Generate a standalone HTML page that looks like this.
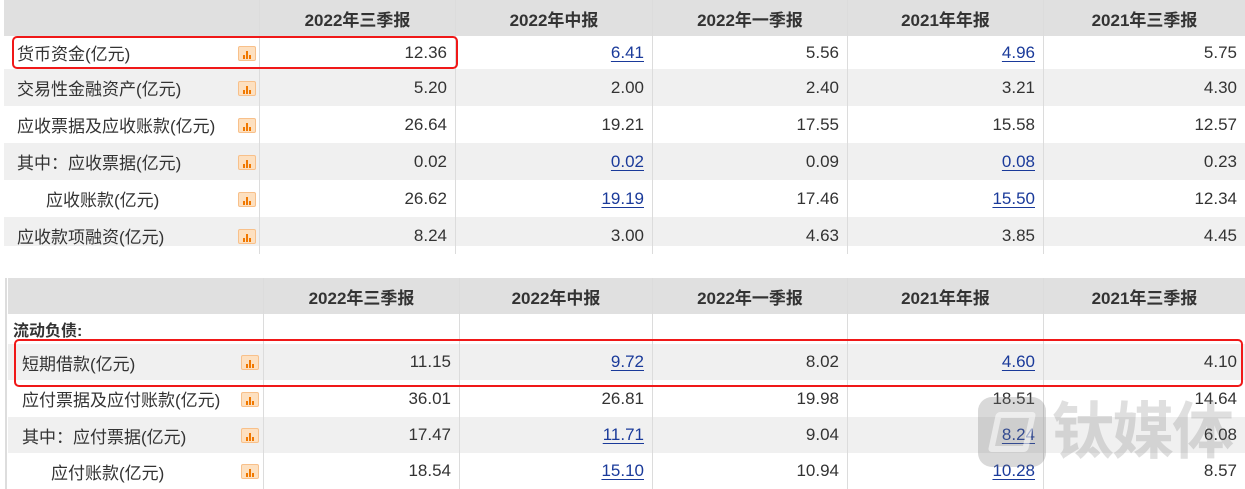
<!DOCTYPE html>
<html><head><meta charset="utf-8"><style>
body{margin:0;width:1245px;height:489px;background:#fff;position:relative;overflow:hidden;font-family:"Liberation Sans","Noto Sans CJK SC",sans-serif;color:#333;font-size:17px}
.r{position:absolute;left:4px;right:0;display:flex;align-items:center}
.g{background:#f0f0f0}
.h{background:#e0e0e0;font-weight:bold;font-size:17px}
.c{position:absolute;top:0;bottom:0;display:flex;align-items:center;justify-content:flex-end;padding-right:8px;box-sizing:border-box;border-left:1px solid #dcdcdc}
.h .c{justify-content:center;padding:0}
.l{position:absolute;top:0;bottom:0;display:flex;align-items:center}
a{color:#1a3a9a;text-decoration:underline;text-underline-offset:3px}
.ic{position:absolute;width:16px;height:13px;background:#fde0c0;border:1px solid #f8c08a;border-radius:2px;top:50%;margin-top:-7px}
.ic:before{content:"";position:absolute;left:4px;bottom:1px;width:2px;height:4px;background:#f07800;box-shadow:3px -2px 0 0 #f07800,6px 0 0 #f07800}
.ic:after{content:"";position:absolute;left:7px;bottom:1px;width:2px;height:8px;background:#f07800}
.box{position:absolute;border:2.5px solid #f01818;border-radius:5px}
</style></head><body>

<div class="r h" style="top:0;height:36px">
<div class="c" style="left:255px;width:196px">2022年三季报</div>
<div class="c" style="left:451px;width:197px">2022年中报</div>
<div class="c" style="left:648px;width:195px">2022年一季报</div>
<div class="c" style="left:843px;width:196px">2021年年报</div>
<div class="c" style="left:1039px;width:202px">2021年三季报</div>
</div>

<div class="r" style="top:36px;height:33px"><div class="l" style="left:13px">货币资金(亿元)</div><span class="ic" style="left:234px"></span>
<div class="c" style="left:255px;width:196px">12.36</div><div class="c" style="left:451px;width:197px"><a>6.41</a></div><div class="c" style="left:648px;width:195px">5.56</div><div class="c" style="left:843px;width:196px"><a>4.96</a></div><div class="c" style="left:1039px;width:202px">5.75</div></div>

<div class="r g" style="top:69px;height:37px"><div class="l" style="left:13px">交易性金融资产(亿元)</div><span class="ic" style="left:234px"></span>
<div class="c" style="left:255px;width:196px">5.20</div><div class="c" style="left:451px;width:197px">2.00</div><div class="c" style="left:648px;width:195px">2.40</div><div class="c" style="left:843px;width:196px">3.21</div><div class="c" style="left:1039px;width:202px">4.30</div></div>

<div class="r" style="top:106px;height:37px"><div class="l" style="left:13px">应收票据及应收账款(亿元)</div><span class="ic" style="left:234px"></span>
<div class="c" style="left:255px;width:196px">26.64</div><div class="c" style="left:451px;width:197px">19.21</div><div class="c" style="left:648px;width:195px">17.55</div><div class="c" style="left:843px;width:196px">15.58</div><div class="c" style="left:1039px;width:202px">12.57</div></div>

<div class="r g" style="top:143px;height:37px"><div class="l" style="left:13px">其中：应收票据(亿元)</div><span class="ic" style="left:234px"></span>
<div class="c" style="left:255px;width:196px">0.02</div><div class="c" style="left:451px;width:197px"><a>0.02</a></div><div class="c" style="left:648px;width:195px">0.09</div><div class="c" style="left:843px;width:196px"><a>0.08</a></div><div class="c" style="left:1039px;width:202px">0.23</div></div>

<div class="r" style="top:180px;height:37px"><div class="l" style="left:42px">应收账款(亿元)</div><span class="ic" style="left:234px"></span>
<div class="c" style="left:255px;width:196px">26.62</div><div class="c" style="left:451px;width:197px"><a>19.19</a></div><div class="c" style="left:648px;width:195px">17.46</div><div class="c" style="left:843px;width:196px"><a>15.50</a></div><div class="c" style="left:1039px;width:202px">12.34</div></div>

<div class="r g" style="top:217px;height:29px;align-items:flex-start"><div class="l" style="left:13px;bottom:-8px">应收款项融资(亿元)</div><span class="ic" style="left:234px;margin-top:-3px"></span>
<div class="c" style="left:255px;width:196px;bottom:-8px">8.24</div><div class="c" style="left:451px;width:197px;bottom:-8px">3.00</div><div class="c" style="left:648px;width:195px;bottom:-8px">4.63</div><div class="c" style="left:843px;width:196px;bottom:-8px">3.85</div><div class="c" style="left:1039px;width:202px;bottom:-8px">4.45</div></div>

<div class="box" style="left:12px;top:36px;width:442px;height:29px"></div>

<div style="position:absolute;left:5px;top:278px;width:2px;height:211px;background:#ddd"></div>
<div class="r h" style="top:278px;height:36px;left:8px">
<div class="c" style="left:255px;width:196px">2022年三季报</div>
<div class="c" style="left:451px;width:193px">2022年中报</div>
<div class="c" style="left:644px;width:195px">2022年一季报</div>
<div class="c" style="left:839px;width:196px">2021年年报</div>
<div class="c" style="left:1035px;width:202px">2021年三季报</div>
</div>
<div class="r" style="top:314px;height:30px;left:8px"><div class="l" style="left:5px;font-weight:bold;font-size:16px">流动负债:</div>
<div class="c" style="left:255px;width:196px"></div><div class="c" style="left:451px;width:193px"></div><div class="c" style="left:644px;width:195px"></div><div class="c" style="left:839px;width:196px"></div><div class="c" style="left:1035px;width:202px"></div></div>

<div class="r g" style="top:344px;height:36px;left:8px"><div class="l" style="left:14px">短期借款(亿元)</div><span class="ic" style="left:233px"></span>
<div class="c" style="left:255px;width:196px">11.15</div><div class="c" style="left:451px;width:193px"><a>9.72</a></div><div class="c" style="left:644px;width:195px">8.02</div><div class="c" style="left:839px;width:196px"><a>4.60</a></div><div class="c" style="left:1035px;width:202px">4.10</div></div>

<div class="r" style="top:380px;height:37px;left:8px"><div class="l" style="left:14px">应付票据及应付账款(亿元)</div><span class="ic" style="left:233px"></span>
<div class="c" style="left:255px;width:196px">36.01</div><div class="c" style="left:451px;width:193px">26.81</div><div class="c" style="left:644px;width:195px">19.98</div><div class="c" style="left:839px;width:196px">18.51</div><div class="c" style="left:1035px;width:202px">14.64</div></div>

<div class="r g" style="top:417px;height:36px;left:8px"><div class="l" style="left:14px">其中：应付票据(亿元)</div><span class="ic" style="left:233px"></span>
<div class="c" style="left:255px;width:196px">17.47</div><div class="c" style="left:451px;width:193px"><a>11.71</a></div><div class="c" style="left:644px;width:195px">9.04</div><div class="c" style="left:839px;width:196px"><a>8.24</a></div><div class="c" style="left:1035px;width:202px">6.08</div></div>

<div class="r" style="top:453px;height:36px;left:8px"><div class="l" style="left:43px">应付账款(亿元)</div><span class="ic" style="left:233px"></span>
<div class="c" style="left:255px;width:196px">18.54</div><div class="c" style="left:451px;width:193px"><a>15.10</a></div><div class="c" style="left:644px;width:195px">10.94</div><div class="c" style="left:839px;width:196px"><a>10.28</a></div><div class="c" style="left:1035px;width:202px">8.57</div></div>

<div class="box" style="left:14px;top:339px;width:1225px;height:44px"></div>

<div style="position:absolute;left:978px;top:397px;width:68px;height:70px;border-radius:14px;background:rgba(120,120,120,0.28)"></div>
<div style="position:absolute;left:992px;top:412px;width:40px;height:40px;border:6px solid rgba(255,255,255,0.55);border-radius:4px;box-sizing:border-box;transform:skewX(-12deg)"></div>
<div style="position:absolute;left:1052px;top:398px;font-size:62px;line-height:70px;font-weight:bold;color:rgba(110,110,110,0.22);letter-spacing:-2px">钛媒体</div>
</body></html>
